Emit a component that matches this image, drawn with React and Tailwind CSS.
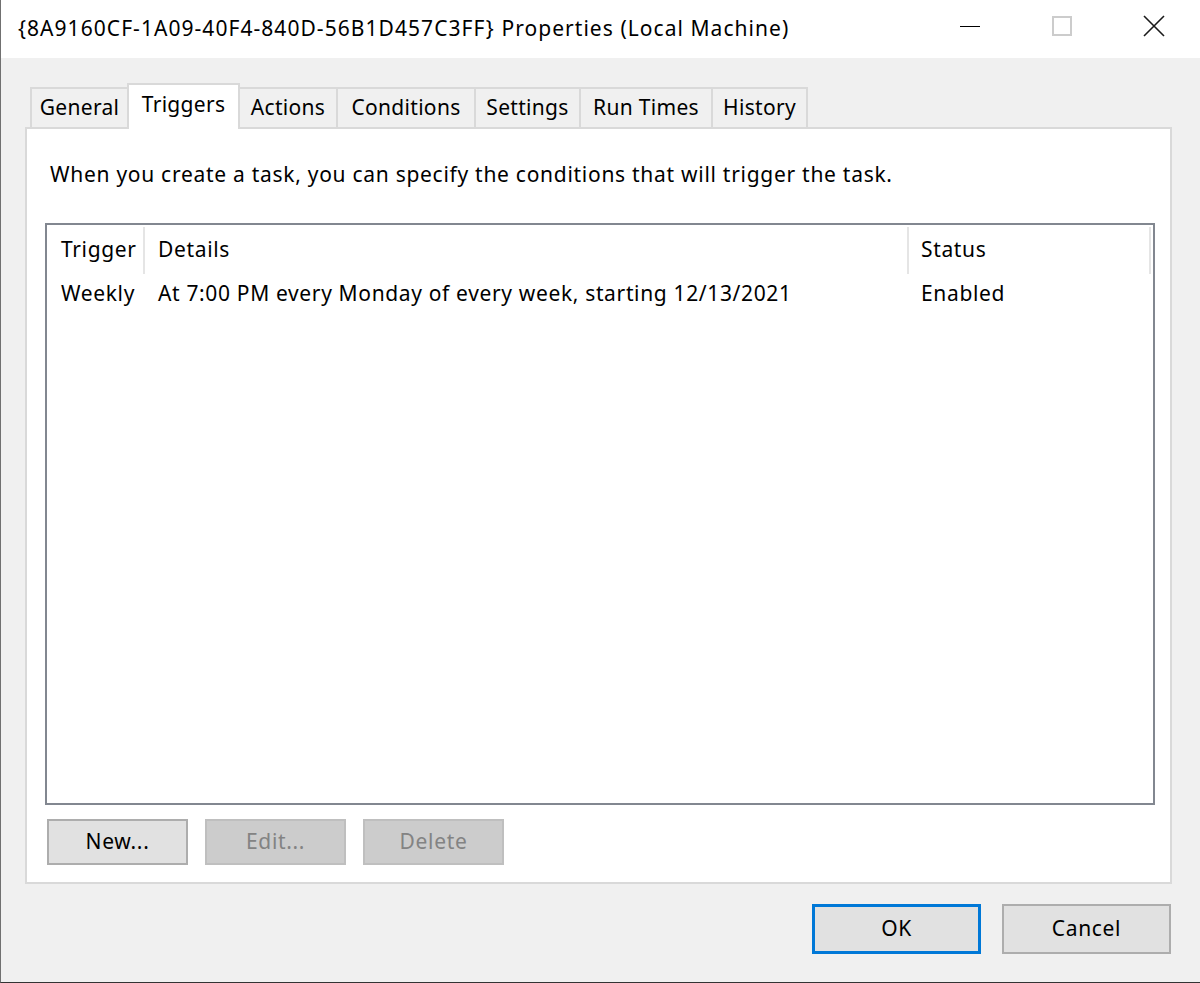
import React from 'react';

const FONT = { fontFamily: '"Noto Sans", "Open Sans", sans-serif' };

const tabs = [
    { label: 'General', w: 'w-[99px]' },
    { label: 'Triggers', w: 'w-[113px]', active: true },
    { label: 'Actions', w: 'w-[100px]' },
    { label: 'Conditions', w: 'w-[140px]' },
    { label: 'Settings', w: 'w-[107px]' },
    { label: 'Run Times', w: 'w-[134px]' },
    { label: 'History', w: 'w-[97px]' },
];

const Tab = ({ label, w, active }) => {
    if (active) {
        return (
            <div className={`${w} h-[46px] -mb-[2px] -ml-[2px] relative z-10 bg-white border-2 border-b-0 border-[#d9d9d9] flex justify-center pt-[4px] tracking-[0.3px]`}>
                <span>{label}</span>
            </div>
        );
    }
    return (
        <div className={`${w} h-[40px] -ml-[2px] first:ml-0 bg-[#f0f0f0] border-2 border-b-0 border-[#d9d9d9] flex justify-center pt-[3px] tracking-[0.3px]`}>
            <span>{label}</span>
        </div>
    );
};

const Button = ({ children, disabled, primary, className = '' }) => {
    let look = 'bg-[#e1e1e1] border-2 border-[#adadad] text-black';
    if (disabled) look = 'bg-[#cccccc] border-2 border-[#bfbfbf] text-[#838383]';
    if (primary) look = 'bg-[#e1e1e1] border-[3px] border-[#0078d7] text-black';
    return (
        <div className={`${look} ${className} flex items-center justify-center`}>
            {children}
        </div>
    );
};

const App = () => {
    return (
        <div className="w-[1200px] h-[983px] bg-[#f0f0f0] border-l border-l-[#707070] border-b border-b-[#333333] flex flex-col text-[21px] tracking-[0.65px] text-black overflow-hidden" style={FONT}>
            {/* title bar */}
            <div className="h-[58px] bg-white flex items-center shrink-0">
                <div className="pl-[17px] flex-1 tracking-[1.05px]">{'{8A9160CF-1A09-40F4-840D-56B1D457C3FF} Properties (Local Machine)'}</div>
                <div className="flex items-center h-full">
                    <div className="w-[92px] h-full flex items-center justify-center">
                        <div className="w-[20px] h-[1px] bg-black mt-[-6px]" />
                    </div>
                    <div className="w-[92px] h-full flex items-center justify-center">
                        <div className="w-[20px] h-[20px] border-2 border-[#cccccc] mt-[-6px]" />
                    </div>
                    <div className="w-[92px] h-full flex items-center justify-center">
                        <svg width="22" height="22" viewBox="0 0 22 22" className="mt-[-6px]">
                            <path d="M1 1 L21 21 M21 1 L1 21" stroke="#1a1a1a" strokeWidth="1.6" />
                        </svg>
                    </div>
                </div>
            </div>

            {/* body */}
            <div className="ml-[24px] w-[1147px] flex flex-col">
                {/* tabs */}
                <div className="mt-[25px] h-[44px] flex items-end pl-[5px]">
                    {tabs.map((t) => (
                        <Tab key={t.label} {...t} />
                    ))}
                </div>

                {/* panel */}
                <div className="h-[757px] bg-white border-2 border-[#d9d9d9] flex flex-col px-[18px]">
                    <div className="mt-[31px] pl-[5px] leading-[28px] tracking-[0.72px]">
                        When you create a task, you can specify the conditions that will trigger the task.
                    </div>

                    {/* list view */}
                    <div className="mt-[35px] h-[582px] w-[1110px] border-2 border-[#828790] flex flex-col">
                        <div className="h-[51px] flex pt-[2px]">
                            <div className="w-[96px] h-[47px] flex items-center pl-[14px] pb-[1px]">Trigger</div>
                            <div className="w-[2px] h-[47px] bg-[#e5e5e5]" />
                            <div className="w-[762px] h-[47px] flex items-center pl-[13px] pb-[1px]">Details</div>
                            <div className="w-[2px] h-[47px] bg-[#e5e5e5]" />
                            <div className="w-[240px] h-[47px] flex items-center pl-[12px] pb-[1px]">Status</div>
                            <div className="w-[2px] h-[47px] bg-[#e5e5e5]" />
                        </div>
                        <div className="h-[38px] flex items-center pb-[2px]">
                            <div className="w-[98px] pl-[14px]">Weekly</div>
                            <div className="w-[764px] pl-[13px]">At 7:00 PM every Monday of every week, starting 12/13/2021</div>
                            <div className="pl-[12px]">Enabled</div>
                        </div>
                    </div>

                    {/* list buttons */}
                    <div className="mt-[14px] ml-[2px] flex gap-[17px]">
                        <Button className="w-[141px] h-[46px]">New...</Button>
                        <Button disabled className="w-[141px] h-[46px]">Edit...</Button>
                        <Button disabled className="w-[141px] h-[46px]">Delete</Button>
                    </div>
                </div>

                {/* dialog buttons */}
                <div className="mt-[20px] flex justify-end gap-[21px] pr-[1px]">
                    <Button primary className="w-[169px] h-[50px]">OK</Button>
                    <Button className="w-[169px] h-[50px]">Cancel</Button>
                </div>
            </div>
        </div>
    );
};

export default App;
